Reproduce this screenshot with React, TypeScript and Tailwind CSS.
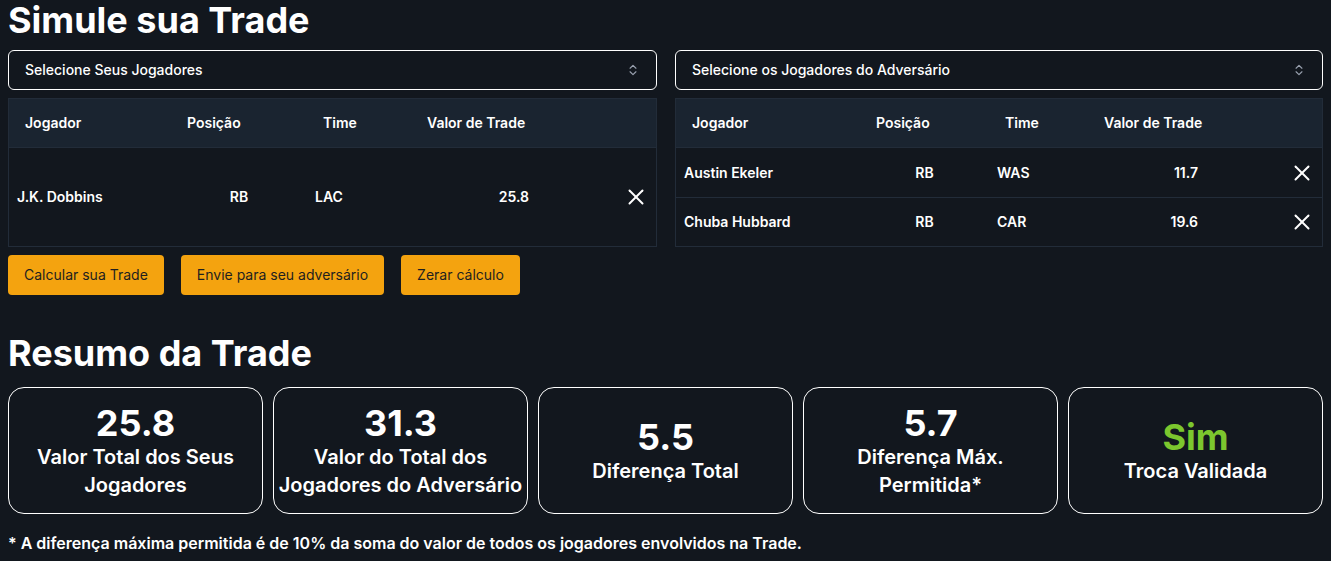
import { ChevronsUpDown } from "lucide-react";

type Player = { nome: string; pos: string; time: string; valor: string };

const meus: Player[] = [{ nome: "J.K. Dobbins", pos: "RB", time: "LAC", valor: "25.8" }];

const adversario: Player[] = [
  { nome: "Austin Ekeler", pos: "RB", time: "WAS", valor: "11.7" },
  { nome: "Chuba Hubbard", pos: "RB", time: "CAR", valor: "19.6" },
];

const resumo = [
  { valor: "25.8", label: "Valor Total dos Seus Jogadores", green: false },
  { valor: "31.3", label: "Valor do Total dos Jogadores do Adversário", green: false },
  { valor: "5.5", label: "Diferença Total", green: false },
  { valor: "5.7", label: "Diferença Máx. Permitida*", green: false },
  { valor: "Sim", label: "Troca Validada", green: true },
];

const CloseIcon = () => (
  <svg width="16" height="16" viewBox="0 0 16 16" fill="none" stroke="currentColor" strokeWidth="2" strokeLinecap="round">
    <line x1="1.5" y1="1.5" x2="14.5" y2="14.5" />
    <line x1="14.5" y1="1.5" x2="1.5" y2="14.5" />
  </svg>
);

const SelectBox = ({ text }: { text: string }) => (
  <div className="flex h-10 items-center justify-between rounded-md border border-white px-4 text-sm font-medium">
    <span>{text}</span>
    <ChevronsUpDown size={14} className="text-gray-400" />
  </div>
);

const TradeTable = ({ players, cols, valPad }: { players: Player[]; cols: string; valPad: string }) => (
  <div className="mt-2 flex flex-1 flex-col border border-[#222c39] text-sm font-semibold">
    <div className={`grid h-[49px] items-center border-b border-[#222c39] bg-[#1a2430] ${cols}`}>
      <div className="px-4">Jogador</div>
      <div className="px-4">Posição</div>
      <div className="px-4">Time</div>
      <div className="px-4">Valor de Trade</div>
      <div />
    </div>
    <div className="flex flex-1 flex-col">
      {players.map((p, i) => (
        <div
          key={p.nome}
          className={`grid min-h-[49px] flex-1 items-center ${cols} ${i > 0 ? "border-t border-[#222c39]" : ""}`}
        >
          <div className="px-2">{p.nome}</div>
          <div className="text-center">{p.pos}</div>
          <div className="px-2">{p.time}</div>
          <div className={`text-right ${valPad}`}>{p.valor}</div>
          <div className="flex justify-end pr-3">
            <CloseIcon />
          </div>
        </div>
      ))}
    </div>
  </div>
);

const App = () => {
  return (
    <div className="min-h-screen bg-[#12171e] px-2 text-white font-['Inter','Noto_Sans',sans-serif]">
      <h1 className="text-4xl font-bold leading-10">Simule sua Trade</h1>

      <div className="mt-[10px] grid grid-cols-[649px_648px] gap-[18px]">
        <div className="flex flex-col">
          <SelectBox text="Selecione Seus Jogadores" />
          <TradeTable players={meus} cols="grid-cols-[162px_136px_104px_158px_1fr]" valPad="pr-[40px]" />
        </div>
        <div className="flex flex-col">
          <SelectBox text="Selecione os Jogadores do Adversário" />
          <TradeTable players={adversario} cols="grid-cols-[184px_129px_99px_148px_1fr]" valPad="pr-[38px]" />
        </div>
      </div>

      <div className="mt-2 flex items-center gap-[17px]">
        <button className="h-10 rounded-sm bg-[#f4a30f] px-4 text-sm text-[#1f1f1f]">Calcular sua Trade</button>
        <button className="h-10 rounded-sm bg-[#f4a30f] px-4 text-sm text-[#1f1f1f]">Envie para seu adversário</button>
        <button className="h-10 rounded-sm bg-[#f4a30f] px-4 text-sm text-[#1f1f1f]">Zerar cálculo</button>
      </div>

      <h2 className="mt-[38px] text-4xl font-bold leading-10">Resumo da Trade</h2>

      <div className="mt-[14px] grid grid-cols-5 gap-[10px]">
        {resumo.map((r) => (
          <div
            key={r.label}
            className="flex h-[127px] flex-col items-center justify-center rounded-2xl border border-white text-center"
          >
            <div className={`text-4xl font-bold leading-10 ${r.green ? "text-[#7cc72e]" : "text-white"}`}>{r.valor}</div>
            <div className="text-xl font-semibold leading-7">{r.label}</div>
          </div>
        ))}
      </div>

      <p className="mt-[17px] text-base font-semibold">
        * A diferença máxima permitida é de 10% da soma do valor de todos os jogadores envolvidos na Trade.
      </p>
    </div>
  );
};

export default App;
